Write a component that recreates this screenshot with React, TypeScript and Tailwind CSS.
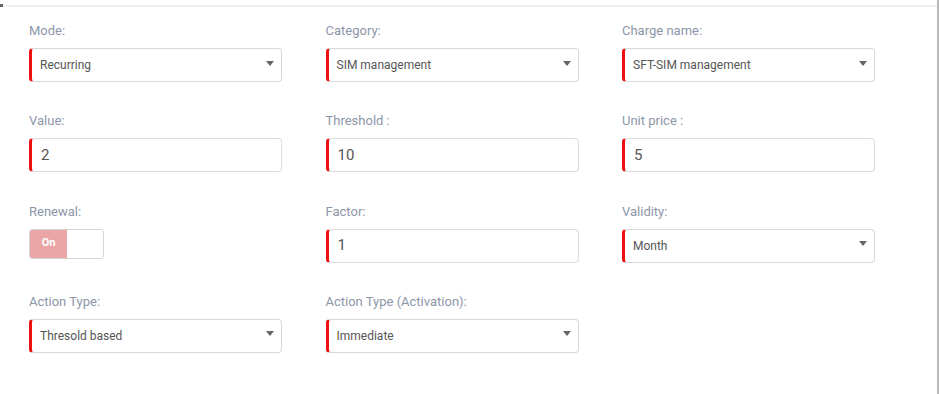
import React from "react";

const font = { fontFamily: 'Roboto, "Noto Sans", sans-serif' };

function Label({ children }: { children: React.ReactNode }) {
  return <div className="h-[20px] text-[13px] leading-[20px] text-[#8d96a8]">{children}</div>;
}

function Caret() {
  return (
    <svg width="8" height="5" viewBox="0 0 8 5" className="mb-[4px] shrink-0">
      <path d="M0 0 L8 0 L4 5 Z" fill="#666" />
    </svg>
  );
}

function Select({ label, value }: { label: string; value: string }) {
  return (
    <div className="flex flex-col gap-[7px]">
      <Label>{label}</Label>
      <div className="flex h-[34px] items-center justify-between rounded-[4px] border border-[#d6d8dc] border-l-[3px] border-l-[#ee1111] bg-white pl-[8px] pr-[7px]">
        <span className="text-[12px] text-[#555]">{value}</span>
        <Caret />
      </div>
    </div>
  );
}

function Input({ label, value }: { label: string; value: string }) {
  return (
    <div className="flex flex-col gap-[7px]">
      <Label>{label}</Label>
      <div className="flex h-[34px] items-center rounded-[4px] border border-[#dcdcdc] border-l-[3px] border-l-[#ee1111] bg-white pl-[9px]">
        <span className="text-[15px] text-[#555]">{value}</span>
      </div>
    </div>
  );
}

function Toggle({ label }: { label: string }) {
  return (
    <div className="flex flex-col gap-[7px]">
      <Label>{label}</Label>
      <div className="flex h-[30px] w-[75px] overflow-hidden rounded-[3px] border border-[#d6d6d6] bg-white">
        <div className="flex w-[37px] items-center justify-center bg-[#eaa6a6] text-[11px] font-bold text-white">On</div>
        <div className="flex-1" />
      </div>
    </div>
  );
}

export default function App() {
  return (
    <div className="relative h-[394px] w-[940px] overflow-hidden bg-white" style={font}>
      <div className="mt-[5px] h-[2px] w-[937px] bg-[#efefef]" />
      <div className="absolute left-0 top-[4px] h-[3px] w-[3px] bg-[#666]" />
      <div className="absolute right-[1px] top-0 h-full w-[2px] bg-[#b8b8b8]" />
      <div className="grid grid-cols-[253px_253px_253px] gap-x-[43.5px] gap-y-[29.33px] pl-[29px] pt-[14px]">
        <Select label="Mode:" value="Recurring" />
        <Select label="Category:" value="SIM management" />
        <Select label="Charge name:" value="SFT-SIM management" />
        <Input label="Value:" value="2" />
        <Input label="Threshold :" value="10" />
        <Input label="Unit price :" value="5" />
        <Toggle label="Renewal:" />
        <Input label="Factor:" value="1" />
        <Select label="Validity:" value="Month" />
        <Select label="Action Type:" value="Thresold based" />
        <Select label="Action Type (Activation):" value="Immediate" />
      </div>
    </div>
  );
}
